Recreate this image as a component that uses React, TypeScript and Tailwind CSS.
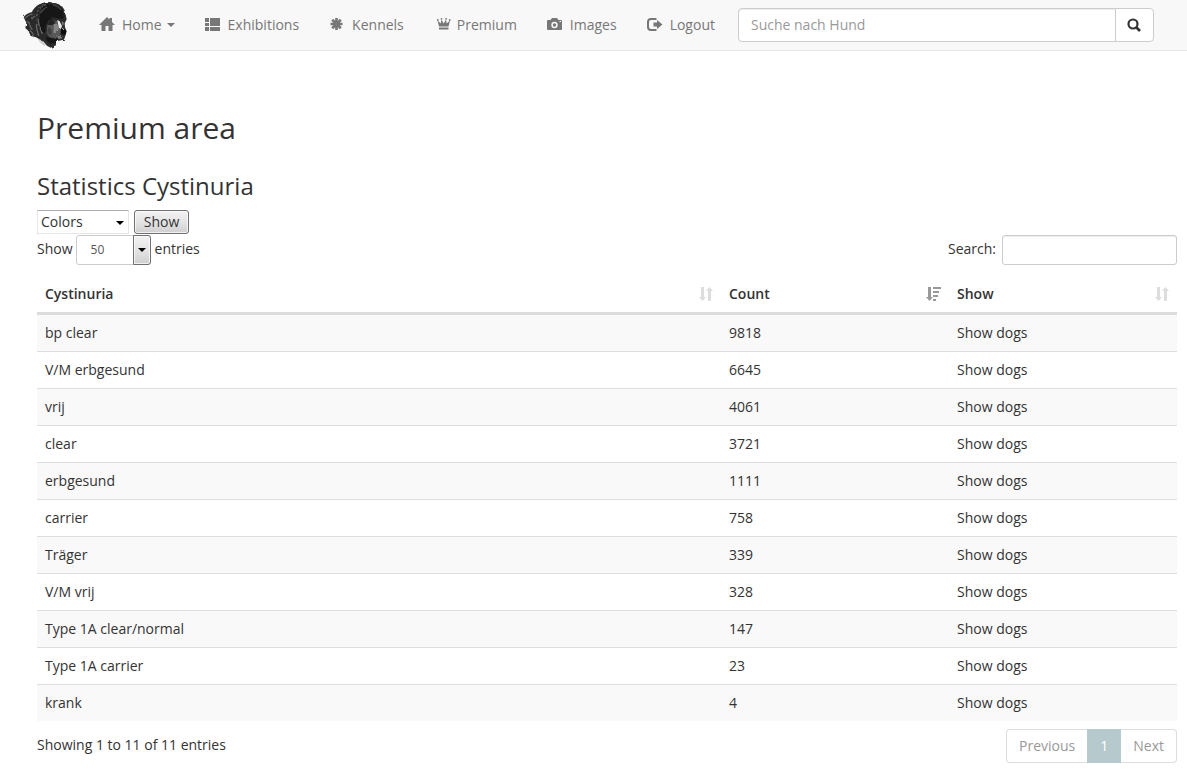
import { ReactNode, useState } from 'react'

type IconProps = { children: ReactNode }

const navLink = 'flex h-[50px] items-center gap-[5px] px-[15px] text-[#777] hover:text-[#333]'

const rows = [
  { name: 'bp clear', count: 9818 },
  { name: 'V/M erbgesund', count: 6645 },
  { name: 'vrij', count: 4061 },
  { name: 'clear', count: 3721 },
  { name: 'erbgesund', count: 1111 },
  { name: 'carrier', count: 758 },
  { name: 'Träger', count: 339 },
  { name: 'V/M vrij', count: 328 },
  { name: 'Type 1A clear/normal', count: 147 },
  { name: 'Type 1A carrier', count: 23 },
  { name: 'krank', count: 4 },
]

function NavIcon({ children }: IconProps) {
  return (
    <svg className="size-[18px] shrink-0" viewBox="0 0 18 18" fill="currentColor" aria-hidden="true">
      {children}
    </svg>
  )
}

function DogLogo() {
  return (
    <svg className="h-12 w-[46px]" viewBox="3 3 138 144" aria-hidden="true">
      <defs>
        <filter id="fur" x="-5%" y="-5%" width="110%" height="110%">
          <feTurbulence type="fractalNoise" baseFrequency="0.09" numOctaves="2" seed="4" result="noise" />
          <feDisplacementMap in="SourceGraphic" in2="noise" scale="9" />
          <feGaussianBlur stdDeviation="1.6" />
        </filter>
      </defs>
      <g filter="url(#fur)">
        <path d="M46 112 L64 122 L80 138 L68 138 L54 128 Z" fill="#cfcfcf" />
        <path
          d="M5 52 Q10 42 30 36 Q36 22 52 13 Q66 6 82 6 Q104 7 120 19 Q129 28 131 44 L134 58 L128 70 L129 82 L134 94 L130 108 L126 119 L110 122 L102 126 L102 136 L86 143 L76 138 L64 124 L50 116 L42 112 L26 108 L20 94 L10 84 L13 68 Z"
          fill="#2b2b2b"
        />
        <path d="M62 18 Q90 6 114 20 Q128 34 128 56 L112 56 L96 52 L80 60 L72 76 L68 98 L58 98 L52 72 L54 40 Z" fill="#151515" />
        {/* fur strands on the ear and neck */}
        <g fill="none" stroke="#6a6a6a" strokeWidth="3.500" strokeLinecap="round">
          <path d="M10 54 Q18 44 32 42M20 66 Q24 78 30 88M30 56 Q36 48 46 44M22 90 Q30 96 34 104" />
          <path d="M48 58 Q50 78 60 100M42 70 Q44 90 50 106" />
          <path d="M46 34 Q56 20 72 14M56 38 Q62 28 74 22" stroke="#525252" />
          <path d="M92 14 Q108 18 116 28" stroke="#444" />
        </g>
        {/* muzzle */}
        <path d="M76 74 L88 66 L104 62 L112 64 L118 82 L116 98 L112 110 L98 114 L82 112 L74 98 Z" fill="#595959" />
        <path d="M76 74 L86 64 L100 64 L98 70 L88 76 Z" fill="#222" />
        <path d="M96 72 L106 72 L110 88 L104 100 L94 98 Z" fill="#858585" />
        <path d="M78 84 L86 82 L90 98 L84 106 L76 98 Z" fill="#404040" />
        <path d="M106 60 L113 64 L120 78 L117 88 L110 82 Z" fill="#e6e6e6" />
        <path d="M118 66 L123 64 L126 72 L122 78 Z" fill="#777" />
        <path d="M116 90 L126 86 L133 94 L130 104 L118 102 Z" fill="#0b0b0b" />
        <path d="M118 86 L124 85" stroke="#aaa" strokeWidth="3" />
        <path d="M106 108 L122 108 L118 116 L108 116 Z" fill="#7d7d7d" />
        <path d="M70 108 L88 116 L108 116 L102 128 L86 132 L76 124 Z" fill="#141414" />
      </g>
    </svg>
  )
}

function SortIcon({ active = false }: { active?: boolean }) {
  return (
    <svg
      className={active ? 'h-[14px] w-[15px] text-[#999]' : 'h-[14px] w-[15px] text-[#ddd]'}
      viewBox="0 0 15 14"
      fill="currentColor"
      aria-hidden="true"
    >
      {active ? (
        <path d="M2 0h3v10h2l-3.500 4L0 10h2zM7 0h8v2H7zM7 4h6v2H7zM7 8h5v2H7zM7 12h3v2H7z" />
      ) : (
        <path d="M3 0h3v10h2l-3.500 4L1 10h2zM10 14h3V4h2l-3.500-4L8 4h2z" />
      )}
    </svg>
  )
}

export default function App() {
  const [list, setList] = useState('Colors')
  const [length, setLength] = useState('50')
  const [query, setQuery] = useState('')

  const visible = rows.filter(row => row.name.toLowerCase().includes(query.toLowerCase()))

  return (
    <div className="min-h-screen bg-white font-['Open_Sans',sans-serif] text-sm leading-5 text-[#333]">
      <nav className="flex h-[51px] items-start border-b border-[#e7e7e7] bg-[#f8f8f8] pl-[23px]">
        <a href="#" aria-label="Start" className="mr-[15px] pt-px">
          <DogLogo />
        </a>

        <ul className="flex">
          <li>
            <a href="#" className={navLink}>
              <NavIcon>
                <path d="M8 1L10.500 3.500V2H13V6L16 9H13.500V15H9.500V10H6.500V15H2.500V9H0Z" />
              </NavIcon>
              Home
              <svg className="h-1 w-2" viewBox="0 0 8 4" fill="currentColor" aria-hidden="true">
                <path d="M0 0h8L4 4z" />
              </svg>
            </a>
          </li>
          <li>
            <a href="#" className={navLink}>
              <NavIcon>
                <path d="M0 2h4v4H0zM5 2h10v8H5zM0 7h4v3H0zM0 11h4v4H0zM5 11h10v4H5z" />
              </NavIcon>
              Exhibitions
            </a>
          </li>
          <li>
            <a href="#" className={navLink}>
              <NavIcon>
                <g stroke="currentColor" strokeWidth="2.700">
                  <path d="M7.500 2v12M1.500 8h12M3.200 3.700l8.600 8.600M11.800 3.700l-8.600 8.600" />
                </g>
              </NavIcon>
              Kennels
            </a>
          </li>
          <li>
            <a href="#" className={navLink}>
              <NavIcon>
                <path d="M5 11.500h9.500V13.500H5zM5 10.500L3.500 4.500l3.300 3L7.300 3.500l2.400 4 2.400-4 .5 4 3.400-3-1.500 6z" />
                <circle cx="3.800" cy="4" r=".9" />
                <circle cx="7.500" cy="2.800" r=".9" />
                <circle cx="12" cy="2.800" r=".9" />
                <circle cx="15.700" cy="4" r=".9" />
              </NavIcon>
              Premium
            </a>
          </li>
          <li>
            <a href="#" className={navLink}>
              <NavIcon>
                <path
                  fillRule="evenodd"
                  d="M1 4h2.500l1.500-2h5L11.500 4H14q1 0 1 1v8q0 1-1 1H1q-1 0-1-1V5q0-1 1-1zM7.500 5.800a3.200 3.200 0 1 0 0 6.400 3.200 3.200 0 0 0 0-6.400zM12.500 5v1H14V5z"
                />
                <circle cx="7.500" cy="9" r="1.700" />
              </NavIcon>
              Images
            </a>
          </li>
          <li>
            <a href="#" className={navLink}>
              <NavIcon>
                <path d="M9.500 3H4Q1 3 1 6v5q0 3 3 3h5.500" fill="none" stroke="currentColor" strokeWidth="2" />
                <path d="M6.500 6.500H10V4l5.500 4.500L10 13v-2.500H6.500z" />
              </NavIcon>
              Logout
            </a>
          </li>
        </ul>

        <form className="mr-[33px] ml-2 flex min-w-0 flex-1 pt-2" onSubmit={e => e.preventDefault()}>
          <input
            type="text"
            aria-label="Suche nach Hund"
            placeholder="Suche nach Hund"
            className="h-[34px] min-w-0 flex-1 rounded-l border border-[#ccc] bg-white px-3 pb-0.5 shadow-[inset_0_1px_1px_rgba(0,0,0,0.075)] placeholder:text-[#999]"
          />
          <button
            type="submit"
            aria-label="Suchen"
            className="-ml-px flex h-[34px] w-[39px] items-center justify-center rounded-r border border-[#ccc] bg-white pr-px"
          >
            <svg className="size-[14px]" viewBox="0 0 14 14" fill="none" stroke="currentColor" aria-hidden="true">
              <circle cx="6" cy="6" r="4.500" strokeWidth="2.200" />
              <path d="M9 9l4 4" strokeWidth="2.600" />
            </svg>
          </button>
        </form>
      </nav>

      <main className="pt-15 pr-[10px] pb-3 pl-[37px]">
        <h1 className="text-[30px] leading-[33px]">Premium area</h1>
        <h2 className="mt-[29px] text-2xl leading-[26px]">Statistics Cystinuria</h2>

        <form className="mt-[11px] flex gap-[5px]" onSubmit={e => e.preventDefault()}>
          <div className="relative">
            <select
              aria-label="Statistic"
              value={list}
              onChange={e => setList(e.target.value)}
              className="h-6 w-[92px] appearance-none border border-[#e3e6eb] border-t-[#abadb3] bg-white pl-[3px]"
            >
              <option>Colors</option>
              <option>Cystinuria</option>
            </select>
            <svg className="pointer-events-none absolute top-[11px] right-[5px] h-1 w-2" viewBox="0 0 8 4" aria-hidden="true">
              <path d="M0 0h8L4 4z" />
            </svg>
          </div>
          <button
            type="submit"
            className="h-6 w-[55px] rounded-[3px] border border-[#707070] bg-linear-to-b from-[#f2f2f2] via-[#e4e4e4] to-[#cfcfcf] leading-5 inset-ring inset-ring-white/70"
          >
            Show
          </button>
        </form>

        <div className="mt-px flex h-[30px] items-start justify-between">
          <label className="flex">
            <span className="pt-1">Show</span>
            <span className="relative mr-1 ml-[3px]">
              <select
                value={length}
                onChange={e => setLength(e.target.value)}
                className="h-[30px] w-[75px] appearance-none rounded-[3px] border border-[#ccc] bg-white pl-[14px] text-xs text-[#555]"
              >
                <option>10</option>
                <option>25</option>
                <option>50</option>
                <option>100</option>
              </select>
              <span className="pointer-events-none absolute top-0 right-0 flex h-[30px] w-[18px] items-center justify-center rounded-r-[3px] border border-[#707070] bg-linear-to-b from-[#f2f2f2] via-[#e4e4e4] to-[#cfcfcf] inset-ring inset-ring-white/70">
                <svg className="h-1 w-2" viewBox="0 0 8 4" aria-hidden="true">
                  <path d="M0 0h8L4 4z" />
                </svg>
              </span>
            </span>
            <span className="pt-1">entries</span>
          </label>
          <label className="flex gap-[6px]">
            <span className="pt-1">Search:</span>
            <input
              type="search"
              value={query}
              onChange={e => setQuery(e.target.value)}
              className="h-[30px] w-[175px] rounded-[3px] border border-[#ccc] bg-white px-[10px] text-xs shadow-[inset_0_1px_1px_rgba(0,0,0,0.075)]"
            />
          </label>
        </div>

        <table className="mt-[11px] w-full table-fixed border-separate border-spacing-0 text-left">
          <thead>
            <tr>
              <th className="w-3/5 border-b-3 border-[#ddd] p-2 font-semibold">
                <div className="flex items-center justify-between">
                  Cystinuria
                  <SortIcon />
                </div>
              </th>
              <th className="w-1/5 border-b-3 border-[#ddd] p-2 font-semibold" aria-sort="descending">
                <div className="flex items-center justify-between">
                  Count
                  <SortIcon active />
                </div>
              </th>
              <th className="w-1/5 border-b-3 border-[#ddd] p-2 font-semibold">
                <div className="flex items-center justify-between">
                  Show
                  <SortIcon />
                </div>
              </th>
            </tr>
          </thead>
          <tbody>
            {visible.map(row => (
              <tr key={row.name} className="group odd:bg-[#f9f9f9]">
                <td className="border-b border-[#ddd] p-2 group-last:border-b-0">{row.name}</td>
                <td className="border-b border-[#ddd] p-2 group-last:border-b-0">{row.count}</td>
                <td className="border-b border-[#ddd] p-2 group-last:border-b-0">
                  <a href="#">Show dogs</a>
                </td>
              </tr>
            ))}
          </tbody>
        </table>

        <div className="mt-2 flex items-start justify-between">
          <p className="pt-[6px]">
            Showing 1 to {visible.length} of {rows.length} entries
          </p>
          <div className="flex h-[34px]">
            <button type="button" className="rounded-l border border-r-0 border-[#ddd] bg-white px-3 text-[#999]">
              Previous
            </button>
            <button type="button" aria-current="page" className="border border-[#b6c9cc] bg-[#b6c9cc] px-3 text-white">
              1
            </button>
            <button type="button" className="rounded-r border border-l-0 border-[#ddd] bg-white px-3 text-[#999]">
              Next
            </button>
          </div>
        </div>
      </main>
    </div>
  )
}
